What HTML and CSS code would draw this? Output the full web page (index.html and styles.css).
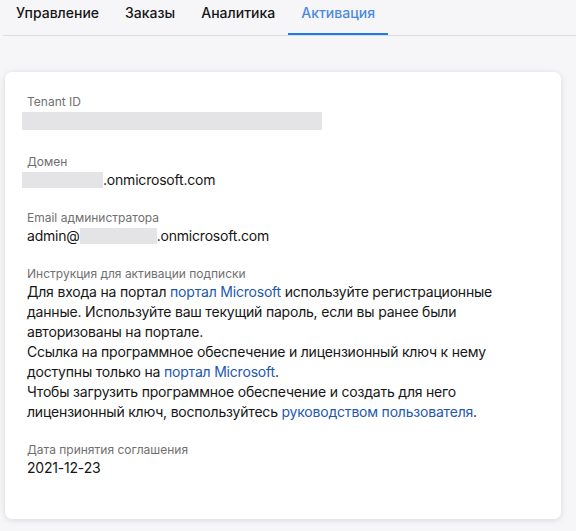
FILE: index.html
```html
<!DOCTYPE html>
<html lang="ru">
<head>
<meta charset="utf-8">
<link rel="stylesheet" href="styles.css">
</head>
<body>
<nav class="tabs">
  <a class="tab">Управление</a>
  <a class="tab">Заказы</a>
  <a class="tab">Аналитика</a>
  <a class="tab active">Активация</a>
</nav>
<main class="card">
  <section class="field field-tenant">
    <div class="label">Tenant ID</div>
    <div class="mask mask-tenant"></div>
  </section>
  <section class="field">
    <div class="label">Домен</div>
    <div class="value"><span class="mask mask-domain"></span>.onmicrosoft.com</div>
  </section>
  <section class="field">
    <div class="label">Email администратора</div>
    <div class="value">admin@<span class="mask mask-email"></span>.onmicrosoft.com</div>
  </section>
  <section class="field">
    <div class="label">Инструкция для активации подписки</div>
    <div class="value text">Для входа на портал <span class="link">портал Microsoft</span> используйте регистрационные данные. Используйте ваш текущий пароль, если вы ранее были авторизованы на портале.<br>Ссылка на программное обеспечение и лицензионный ключ к нему доступны только на <span class="link">портал Microsoft</span>.<br>Чтобы загрузить программное обеспечение и создать для него лицензионный ключ, воспользуйтесь <span class="link">руководством пользователя</span>.</div>
  </section>
  <section class="field">
    <div class="label">Дата принятия соглашения</div>
    <div class="value">2021-12-23</div>
  </section>
</main>
</body>
</html>
```

FILE: styles.css
```css
* { box-sizing: border-box; }
html, body { margin: 0; padding: 0; }
body {
  background: #f6f6f9;
  font-family: "Inter", "Noto Sans", sans-serif;
  color: #161616;
  width: 576px;
  height: 531px;
  overflow: hidden;
}
.tabs {
  display: flex;
  margin-left: 3px;
  height: 36px;
  border-bottom: 1px solid #dcdce0;
}
.tab {
  display: block;
  padding: 4px 13px 0;
  height: 35px;
  font-size: 14px;
  line-height: 18px;
  font-weight: 500;
  color: #161616;
  border-bottom: 2px solid transparent;
}
.tab.active {
  color: #4a89e0;
  border-bottom-color: #1f7ae6;
}
.card {
  margin: 36px 15px 0 5px;
  height: 447px;
  background: #fff;
  border-radius: 7px;
  box-shadow: 0 1px 6px rgba(0, 0, 0, 0.12);
  padding: 22px 17px 0 17px;
}
.field { margin-bottom: 20px; padding-left: 5px; }
.field-tenant { margin-bottom: 24px; }
.label {
  font-size: 12px;
  line-height: 16px;
  color: #707070;
}
.value {
  font-size: 14px;
  line-height: 20px;
  color: #161616;
  letter-spacing: -0.2px;
}
.mask {
  display: inline-block;
  background: #e4e4e6;
  vertical-align: top;
}
.mask-tenant { width: 300px; height: 18px; margin: 2px 0 0 -5px; }
.mask-domain { width: 81px; height: 16px; margin: 2px 0 0 -5px; }
.mask-email { width: 77px; height: 16px; margin-top: 2px; }
.link { color: #2457b0; }
```
